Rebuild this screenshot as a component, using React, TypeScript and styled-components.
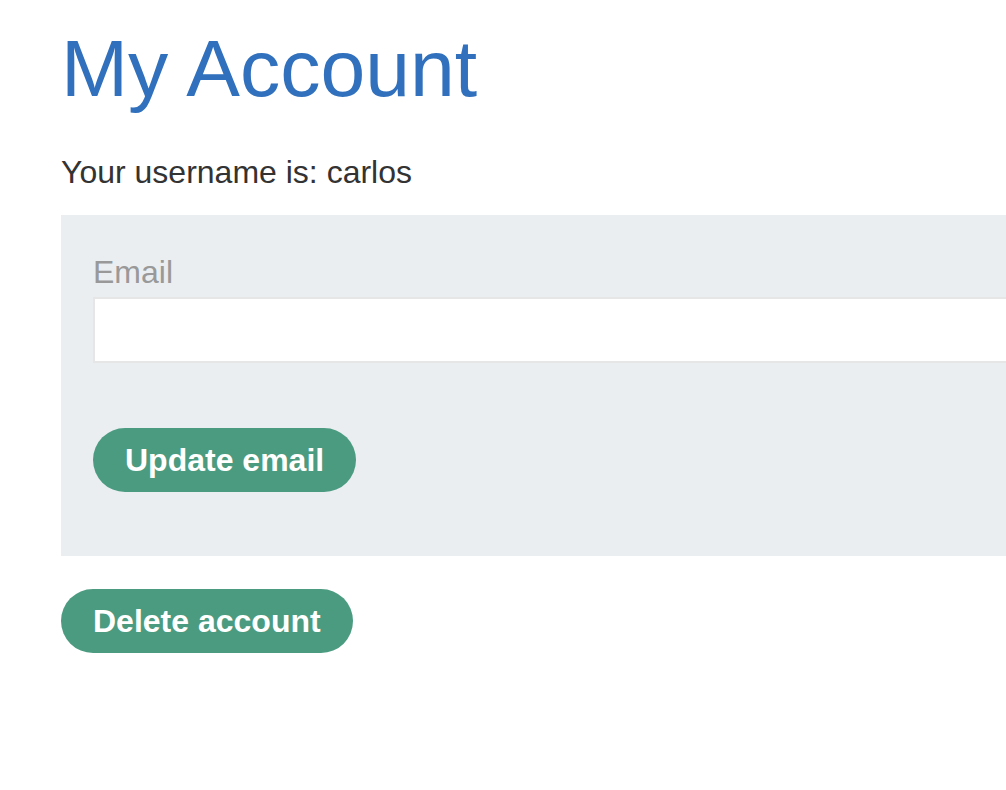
import styled, { createGlobalStyle } from 'styled-components';

const GlobalStyle = createGlobalStyle`
  html, body {
    margin: 0;
    padding: 0;
    background: #ffffff;
  }

  body {
    font-family: 'Liberation Sans', Arial, Helvetica, sans-serif;
    color: #333333;
  }
`;

export default function App() {
  return (
    <>
      <GlobalStyle />
      <Page>
        <Title>My Account</Title>
        <Username>Your username is: carlos</Username>
        <EmailForm onSubmit={(e) => e.preventDefault()}>
          <Label htmlFor="email">Email</Label>
          <EmailInput id="email" type="email" name="email" />
          <Button type="submit" $top={65}>Update email</Button>
        </EmailForm>
        <Button type="button" $top={33}>Delete account</Button>
      </Page>
    </>
  );
}

const Page = styled.div`
  display: flex;
  flex-direction: column;
  align-items: flex-start;
  padding: 0 0 80px 61px;
`;

const Title = styled.h1`
  margin: 28px 0 0 0;
  font-size: 80.5px;
  line-height: 81px;
  font-weight: 400;
  color: #3070bd;
`;

const Username = styled.p`
  margin: 43px 0 0 0;
  font-size: 32px;
  line-height: 40px;
  color: #333333;
`;

/* the panel runs on to the right edge of the window, so no right padding shows */
const EmailForm = styled.form`
  display: flex;
  flex-direction: column;
  align-items: flex-start;
  align-self: stretch;
  box-sizing: border-box;
  margin-top: 23px;
  padding: 37px 0 64px 32px;
  background: #ebeef1;
`;

const Label = styled.label`
  font-size: 32px;
  line-height: 40px;
  color: #999999;
`;

const EmailInput = styled.input`
  box-sizing: border-box;
  width: 100%;
  height: 66px;
  margin-top: 5px;
  padding: 0 16px;
  border: 2px solid #e6e6e6;
  border-right: none;
  background: #ffffff;
  font-family: inherit;
  font-size: 32px;
  outline: none;
`;

const Button = styled.button<{ $top: number }>`
  height: 64px;
  margin-top: ${(p) => p.$top}px;
  padding: 0 32px;
  border: none;
  border-radius: 32px;
  background: #4b9b80;
  color: #ffffff;
  font-family: inherit;
  font-size: 32px;
  font-weight: 700;
  cursor: pointer;
`;
